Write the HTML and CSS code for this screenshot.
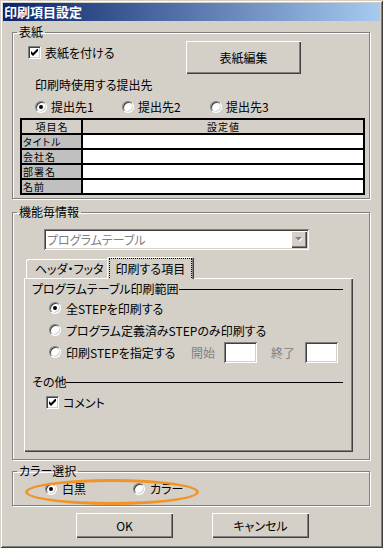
FILE: index.html
```html
<!DOCTYPE html>
<html lang="ja">
<head>
    <meta charset="UTF-8">
    <title>印刷項目設定</title>
    <link rel="stylesheet" href="styles.css">
</head>
<body>
<div class="window">
    <div class="titlebar">印刷項目設定</div>

    <div class="client">
        <!-- 表紙 -->
        <fieldset class="group group-cover">
            <legend>表紙</legend>
            <div class="cover-top">
                <label class="check">
                    <span class="checkbox"><svg viewBox="0 0 7 7" width="7" height="7"><path d="M0 2 L2 4 L7 -1 L7 2 L2 7 L0 5 Z" fill="#000"/></svg></span>
                    表紙を付ける
                </label>
                <button class="btn btn-edit">表紙編集</button>
            </div>
            <div class="caption">印刷時使用する提出先</div>
            <div class="radio-row dest">
                <label class="opt"><span class="radio on"></span>提出先1</label>
                <label class="opt"><span class="radio"></span>提出先2</label>
                <label class="opt"><span class="radio"></span>提出先3</label>
            </div>
            <table class="grid">
                <tr><th class="col-name">項目名</th><th>設定値</th></tr>
                <tr><td class="col-name">タイトル</td><td></td></tr>
                <tr><td class="col-name">会社名</td><td></td></tr>
                <tr><td class="col-name">部署名</td><td></td></tr>
                <tr><td class="col-name">名前</td><td></td></tr>
            </table>
        </fieldset>

        <!-- 機能毎情報 -->
        <fieldset class="group group-func">
            <legend>機能毎情報</legend>
            <div class="combo">
                <span class="combo-text">プログラムテーブル</span>
                <span class="combo-btn"><svg viewBox="0 0 8 5" width="8" height="5"><path d="M0 0 H7 L3.5 3.5 Z" fill="#808080"/></svg></span>
            </div>
            <div class="tabs">
                <div class="tab">ヘッダ・フッタ</div>
                <div class="tab active"><span class="focus">印刷する項目</span></div>
            </div>
            <div class="tab-panel">
                <div class="sep">プログラムテーブル印刷範囲</div>
                <div class="range-row range-first">
                    <label class="opt"><span class="radio on"></span>全STEPを印刷する</label>
                </div>
                <div class="range-row">
                    <label class="opt"><span class="radio"></span>プログラム定義済みSTEPのみ印刷する</label>
                </div>
                <div class="range-row">
                    <label class="opt opt-wide"><span class="radio"></span>印刷STEPを指定する</label>
                    <span class="dim lbl-start">開始</span>
                    <span class="field"></span>
                    <span class="dim lbl-end">終了</span>
                    <span class="field"></span>
                </div>
                <div class="sep sep-other">その他</div>
                <label class="check check-comment">
                    <span class="checkbox"><svg viewBox="0 0 7 7" width="7" height="7"><path d="M0 2 L2 4 L7 -1 L7 2 L2 7 L0 5 Z" fill="#000"/></svg></span>
                    コメント
                </label>
            </div>
        </fieldset>

        <!-- カラー選択 -->
        <fieldset class="group group-color">
            <legend>カラー選択</legend>
            <div class="radio-row color-row">
                <label class="opt opt-mono"><span class="radio on"></span>白黒</label>
                <label class="opt"><span class="radio"></span>カラー</label>
                <span class="ring"></span>
            </div>
        </fieldset>

        <div class="buttons">
            <button class="btn btn-ok">OK</button>
            <button class="btn btn-cancel">キャンセル</button>
        </div>
    </div>
</div>
</body>
</html>
```

FILE: styles.css
```css
* {
    box-sizing: border-box;
}

body {
    margin: 0;
    background: #d4d0c8;
    font-family: "Noto Sans CJK JP", "Noto Sans", sans-serif;
    font-size: 12px;
    color: #000;
}

/* --- window frame --- */
.window {
    width: 383px;
    height: 548px;
    padding: 3px;
    background: #d4d0c8;
    box-shadow: inset 1px 1px #d4d0c8, inset -1px -1px #404040,
                inset 2px 2px #fff, inset -2px -2px #808080;
}

.titlebar {
    height: 18px;
    line-height: 18px;
    padding-left: 1px;
    font-size: 13px;
    font-weight: bold;
    color: #fff;
    background: linear-gradient(to right, #0a246a, #a6caf0);
}

.client {
    font-feature-settings: "palt";
}

/* --- group boxes --- */
.group {
    width: 358px;
    margin: 0 0 0 9px;
    padding: 0;
    border: 1px solid #808080;
    box-shadow: inset 1px 1px #fff, 1px 1px #fff;
    min-inline-size: 0;
}

.group legend {
    margin-left: 4px;
    padding: 0 2px;
    line-height: 12px;
    font-size: 12px;
}

.group-cover {
    margin-top: 5px;
    padding-bottom: 3px;
}

.group-func {
    margin-top: 7px;
    padding-bottom: 7px;
}

.group-color {
    margin-top: 5px;
    padding-bottom: 10px;
}

/* --- common controls --- */
.btn {
    font: inherit;
    color: #000;
    background: #d4d0c8;
    border: none;
    padding: 0;
    box-shadow: inset 1px 1px #fff, inset -1px -1px #404040, inset -2px -2px #808080;
}

.check {
    display: flex;
    align-items: center;
    gap: 4px;
    height: 13px;
    line-height: 13px;
}

.checkbox {
    width: 13px;
    height: 13px;
    background: #fff;
    border: 1px solid;
    border-color: #808080 #fff #fff #808080;
    box-shadow: inset 1px 1px #404040, inset -1px -1px #d4d0c8;
    display: flex;
    align-items: center;
    justify-content: center;
}

.checkbox svg {
    display: block;
}

.opt {
    display: flex;
    align-items: center;
    gap: 4px;
    line-height: 13px;
}

.radio {
    position: relative;
    flex: none;
    width: 12px;
    height: 12px;
    border-radius: 50%;
    background: #fff;
    border: 1px solid;
    border-color: #808080 #fff #fff #808080;
    box-shadow: inset 1px 1px #404040, inset -1px -1px #d4d0c8;
}

.radio.on::after {
    content: "";
    position: absolute;
    left: 3px;
    top: 3px;
    width: 4px;
    height: 4px;
    border-radius: 50%;
    background: #000;
}

.dim {
    color: #808080;
}

.field {
    width: 33px;
    height: 21px;
    background: #fff;
    box-shadow: inset 1px 1px #808080, inset -1px -1px #fff,
                inset 2px 2px #404040, inset -2px -2px #d4d0c8;
}

/* --- 表紙 --- */
.cover-top {
    display: flex;
    align-items: flex-start;
    margin-top: 3px;
    padding-left: 15px;
}

.cover-top .check {
    margin-top: 5px;
}

.btn-edit {
    width: 115px;
    height: 33px;
    margin-left: auto;
    margin-right: 68px;
    font-size: 12px;
}

.caption {
    margin-top: 4px;
    padding-left: 22px;
    line-height: 13px;
}

.radio-row {
    display: flex;
    height: 13px;
}

.dest {
    margin-top: 9px;
    padding-left: 22px;
}

.dest .opt {
    width: 87px;
}

.dest .opt:nth-child(2) {
    width: 88px;
}

.grid {
    margin: 5px 0 0 7px;
    width: 345px;
    border-collapse: separate;
    border-spacing: 0;
    border-top: 2px solid #000;
    border-left: 2px solid #000;
    table-layout: fixed;
    font-size: 10px;
}

.grid th,
.grid td {
    height: 15px;
    padding: 0 0 0 1px;
    border-right: 2px solid #000;
    border-bottom: 2px solid #000;
    background: #fff;
    font-weight: normal;
    font-size: 10px;
    line-height: 13px;
    text-align: left;
    white-space: nowrap;
    letter-spacing: 1px;
}

.grid th {
    background: #d4d0c8;
    text-align: center;
}

.grid .col-name {
    width: 61px;
    background: #c0c0c0;
}

.grid th.col-name {
    background: #d4d0c8;
}

/* --- 機能毎情報 --- */
.combo {
    display: flex;
    align-items: center;
    width: 265px;
    height: 21px;
    margin: 11px 0 0 31px;
    padding: 2px;
    background: #fff;
    box-shadow: inset 1px 1px #808080, inset -1px -1px #fff,
                inset 2px 2px #404040, inset -2px -2px #d4d0c8;
}

.combo-text {
    flex: 1;
    padding-left: 1px;
    color: #808080;
    line-height: 17px;
}

.combo-btn {
    width: 16px;
    height: 17px;
    display: flex;
    align-items: center;
    justify-content: center;
    background: #d4d0c8;
    box-shadow: inset 1px 1px #fff, inset -1px -1px #404040, inset -2px -2px #808080;
}

.combo-btn svg {
    display: block;
    filter: drop-shadow(1px 1px 0 #fff);
}

.tabs {
    display: flex;
    align-items: flex-end;
    height: 21px;
    margin: 7px 0 0 11px;
}

.tab {
    height: 19px;
    margin-left: 2px;
    padding: 0 5px 0 9px;
    line-height: 19px;
    border-radius: 2px 2px 0 0;
    background: #d4d0c8;
    box-shadow: inset 1px 1px #fff, inset -1px 0 #404040, inset -2px 0 #808080;
}

.tab.active {
    position: relative;
    z-index: 1;
    height: 22px;
    margin: 0 0 -1px -2px;
    padding: 1px 2px 0 2px;
    line-height: 19px;
}

.tab .focus {
    display: block;
    height: 20px;
    padding: 0 6px;
    border: 1px dotted #000;
    border-bottom: none;
}

.tab-panel {
    width: 329px;
    height: 174px;
    margin-left: 11px;
    padding: 4px 10px 0 1px;
    box-shadow: inset 1px 1px #fff, inset -1px -1px #404040, inset -2px -2px #808080;
}

.sep {
    display: flex;
    align-items: center;
    height: 13px;
    padding-left: 7px;
    line-height: 13px;
}

.sep::after {
    content: "";
    flex: 1;
    height: 1px;
    margin-top: 2px;
    background: #000;
}

.range-row {
    display: flex;
    align-items: center;
    height: 22px;
    padding-left: 24px;
}

.range-first {
    margin-top: 2px;
}

.range-row .opt {
    gap: 5px;
}

.opt-wide {
    width: 142px;
}

.lbl-start {
    width: 33px;
}

.lbl-end {
    width: 34px;
    margin-left: 14px;
}

.sep-other {
    margin-top: 12px;
}

.check-comment {
    margin-top: 8px;
    padding-left: 21px;
}

/* --- カラー選択 --- */
.color-row {
    position: relative;
    margin-top: 5px;
    padding-left: 32px;
}

.color-row .opt {
    gap: 5px;
}

.opt-mono {
    width: 88px;
}

.ring {
    position: absolute;
    left: 12px;
    top: -3px;
    width: 174px;
    height: 26px;
    border: 3px solid #f29325;
    border-radius: 50%;
}

/* --- OK / キャンセル --- */
.buttons {
    display: flex;
    gap: 39px;
    margin: 7px 0 0 73px;
}

.buttons .btn {
    width: 97px;
    height: 25px;
}
```
